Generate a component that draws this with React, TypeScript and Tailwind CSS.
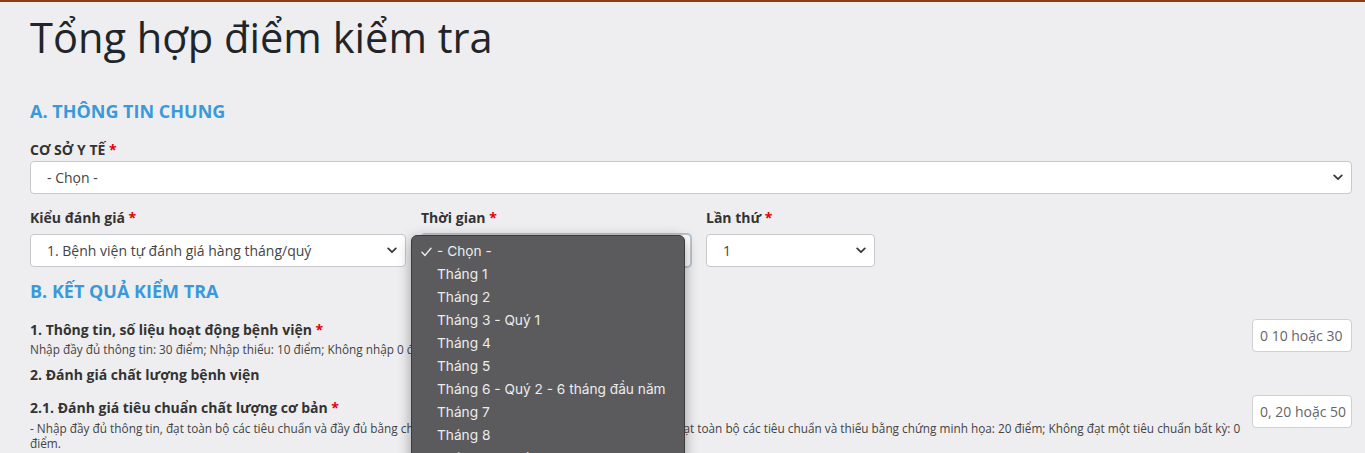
import React from "react";

const Chevron = () => (
  <svg width="10" height="7" viewBox="0 0 10 7" className="shrink-0">
    <path d="M1.2 1.4 L5 5.2 L8.8 1.4" fill="none" stroke="#3a3a3a" strokeWidth="1.8" strokeLinecap="round" strokeLinejoin="round" />
  </svg>
);

const Star = () => <span className="text-[#e00000]"> *</span>;

function SelectBox({ text, className = "" }: { text: string; className?: string }) {
  return (
    <div
      className={`h-[33px] bg-white border border-[#c8c8ca] rounded-[4px] flex items-center justify-between pl-[16px] pr-[8px] text-[14px] text-[#444] ${className}`}
    >
      <span>{text}</span>
      <Chevron />
    </div>
  );
}

const months = [
  "Tháng 1",
  "Tháng 2",
  "Tháng 3 - Quý 1",
  "Tháng 4",
  "Tháng 5",
  "Tháng 6 - Quý 2 - 6 tháng đầu năm",
  "Tháng 7",
  "Tháng 8",
  "Tháng 9 - Quý 3",
  "Tháng 10",
];

export default function App() {
  return (
    <div className="relative min-h-[453px] h-[453px] overflow-hidden bg-[#eeeef0] border-t-2 border-[#8e3b17] font-['Open_Sans',sans-serif] text-[#333]">
      <div className="pl-[30px] pr-[13px]">
        <h1 className="mt-[10px] text-[41.6px] leading-[50px] text-[#212529] font-normal">Tổng hợp điểm kiểm tra</h1>

        <h2 className="mt-[38px] text-[18px] leading-[22px] font-bold text-[#3a9ad9]">A. THÔNG TIN CHUNG</h2>

        <div className="mt-[18px] text-[14px] leading-[20px] font-bold text-[#333]">
          CƠ SỞ Y TẾ<Star />
        </div>
        <SelectBox text="- Chọn -" className="mt-[1px] h-[32px]" />

        <div className="mt-[14px] flex gap-[15px]">
          <div className="w-[376px]">
            <div className="text-[14px] leading-[20px] font-bold">
              Kiểu đánh giá<Star />
            </div>
            <SelectBox text="1. Bệnh viện tự đánh giá hàng tháng/quý" className="mt-[6px]" />
          </div>
          <div className="w-[270px]">
            <div className="text-[14px] leading-[20px] font-bold">
              Thời gian<Star />
            </div>
            <SelectBox text="- Chọn -" className="mt-[6px] border-[#6aa9ec] shadow-[0_0_0_1px_#9cc6f2]" />
          </div>
          <div className="w-[169px]">
            <div className="text-[14px] leading-[20px] font-bold">
              Lần thứ<Star />
            </div>
            <SelectBox text="1" className="mt-[6px]" />
          </div>
        </div>

        <h2 className="mt-[13px] text-[18px] leading-[22px] font-bold text-[#3a9ad9]">B. KẾT QUẢ KIỂM TRA</h2>

        <div className="mt-[17px] flex items-start gap-[2px]">
          <div className="flex-1 pt-[1px]">
            <div className="text-[14px] leading-[20px] font-bold">
              1. Thông tin, số liệu hoạt động bệnh viện<Star />
            </div>
            <div className="mt-[2px] text-[11.8px] leading-[15px] text-[#444]">
              Nhập đầy đủ thông tin: 30 điểm; Nhập thiếu: 10 điểm; Không nhập 0 điểm
            </div>
          </div>
          <div className="w-[100px] h-[33px] bg-white border border-[#d0d0d2] rounded-[4px] flex items-center pl-[7px] text-[14px] text-[#666]">
            0 10 hoặc 30
          </div>
        </div>

        <div className="mt-[8px] text-[14px] leading-[20px] font-bold">2. Đánh giá chất lượng bệnh viện</div>

        <div className="mt-[13px] flex items-start gap-[2px]">
          <div className="flex-1">
            <div className="text-[14px] leading-[20px] font-bold">
              2.1. Đánh giá tiêu chuẩn chất lượng cơ bản<Star />
            </div>
            <div className="mt-[3px] text-[11.8px] leading-[15px] text-[#444]">
              - Nhập đầy đủ thông tin, đạt toàn bộ các tiêu chuẩn và đầy đủ bằng chứng minh họa: 50 điểm; Nhập đầy đủ thông tin, đạt toàn bộ các tiêu chuẩn và thiếu bằng chứng minh họa: 20 điểm; Không đạt một tiêu chuẩn bất kỳ: 0 điểm.
            </div>
          </div>
          <div className="-mt-[3px] w-[100px] h-[33px] bg-white border border-[#d0d0d2] rounded-[4px] flex items-center pl-[7px] text-[14px] text-[#666]">
            0, 20 hoặc 50
          </div>
        </div>
      </div>

      {/* open native dropdown */}
      <div className="absolute left-[411px] top-[233px] w-[274px] h-[300px] rounded-[6px] bg-[#5b5b5d] border border-[#3c3c3e] shadow-[0_4px_14px_rgba(0,0,0,0.35)] pt-[4px] font-['Inter',sans-serif] text-[13.7px] leading-[23px] text-[#ececec]">
        <div className="relative pl-[25px]">
          <svg width="11" height="10" viewBox="0 0 11 10" className="absolute left-[9px] top-[7px]">
            <path d="M1 5.2 L4 8.4 L10 1.2" fill="none" stroke="#ececec" strokeWidth="1.4" strokeLinecap="round" strokeLinejoin="round" />
          </svg>
          - Chọn -
        </div>
        {months.map((m) => (
          <div key={m} className="pl-[25px] whitespace-nowrap">
            {m}
          </div>
        ))}
      </div>
    </div>
  );
}
